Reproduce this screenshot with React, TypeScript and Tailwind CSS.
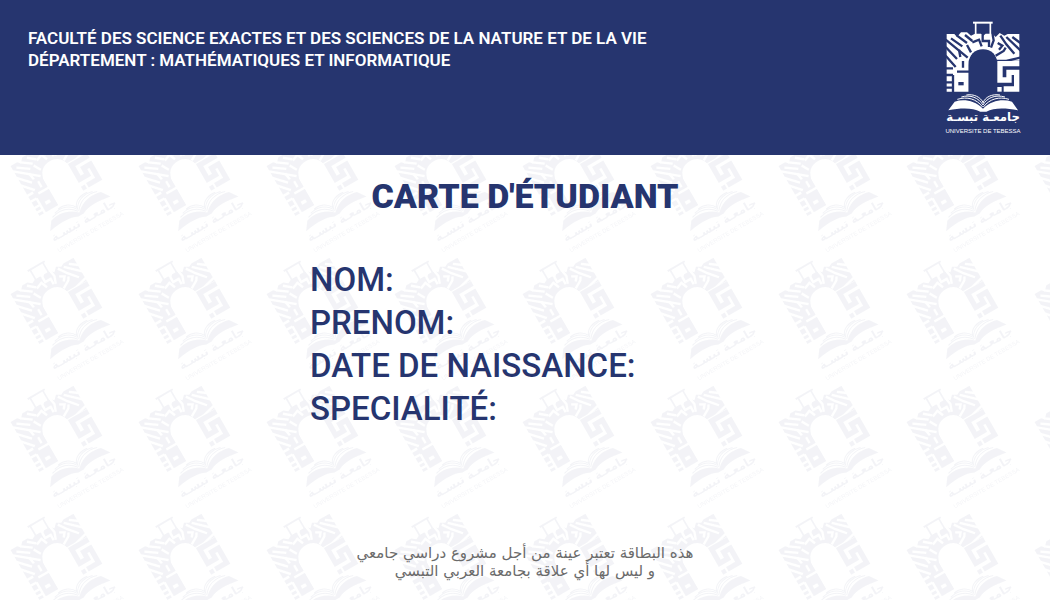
const WATERMARK_PITCH = 128;
const WATERMARK_ROWS = [31, 159, 287, 415, 543];
const WATERMARK_COLUMNS = Array.from({ length: 20 }, (_, i) => 64 + i * WATERMARK_PITCH);

const FIELDS = ["NOM:", "PRENOM:", "DATE DE NAISSANCE:", "SPECIALITÉ:"];

function LogoArt() {
  return (
    <>
      <g fill="none" stroke="currentColor">
        <path d="M114 23H173" strokeWidth="6" />
        <path d="M122 23V62M166 23V62" strokeWidth="5" />
      </g>
      <path
        mask="url(#gate-gaps)"
        fill="currentColor"
        d="M35 57H58L66 66L78 52H96L108 62L120 56H138L143 64L152 56H172L182 66L194 54L208 62L218 57H253V137H187L175 118H112L101 137V230H35Z"
      />
      <path
        fill="none"
        stroke="currentColor"
        strokeWidth="16"
        d="M253 146H195V195H222V172H245V222H206"
      />
      <path fill="currentColor" d="M187 216H200V230H187Z" />
      <path
        fill="currentColor"
        d="M40 286L59 260C85 252 117 255 144 281C171 255 204 252 231 260L249 286C211 279 177 278 154 290H136C112 278 78 279 40 286Z"
      />
      <g fill="none" stroke="currentColor" strokeWidth="3">
        <path d="M67 253C96 244 124 251 143 276M79 246C106 238 131 248 144 270M94 240C116 236 137 246 145 264" />
        <path d="M222 253C193 244 164 251 145 276M210 246C181 238 156 248 144 270M195 240C171 236 150 246 144 264" />
      </g>
      <text
        x="144"
        y="319"
        textAnchor="middle"
        fill="currentColor"
        direction="rtl"
        className="font-['DejaVu_Sans',sans-serif] text-[35px] font-bold"
      >
        جامعـة تبسـة
      </text>
      <text
        x="144"
        y="354"
        textAnchor="middle"
        fill="currentColor"
        className="font-['Liberation_Sans',sans-serif] text-[18px]"
      >
        UNIVERSITE DE TEBESSA
      </text>
    </>
  );
}

function GateMask() {
  return (
    <mask id="gate-gaps" maskUnits="userSpaceOnUse" x="0" y="0" width="285" height="375">
      <rect width="285" height="375" fill="white" />
      <path d="M101 240V150C101 119 119 103 144 103S187 119 187 150V240Z" fill="black" />
      <g fill="none" stroke="black" strokeWidth="7">
        <path d="M48 70L82 94M66 62L96 84M90 60L112 78" />
        <path d="M32 74L64 100L98 128M32 96L66 132M32 122L62 156" />
        <path d="M72 104L76 126M96 90L108 112M84 138V158" />
        <path d="M54 160H30M66 170H104M32 180H54M54 180V236M32 202H54M32 218H54" />
        <path d="M70 206H86" strokeWidth="10" />
        <path d="M112 82L132 74L140 94M143 60V78H162V96" />
        <path d="M172 54L176 76L168 98M188 84L202 92L192 104" />
        <path d="M196 62L214 88L238 116M214 66L258 108M232 66L256 84" />
        <path d="M182 122L206 108L212 98M186 138H214L258 127" />
      </g>
    </mask>
  );
}

function Watermark() {
  return (
    <svg className="absolute inset-0 h-full w-full text-[#26356f] opacity-5" aria-hidden="true">
      {WATERMARK_ROWS.map((y) =>
        WATERMARK_COLUMNS.map((x) => (
          <use
            key={`${x}-${y}`}
            href="#university-logo"
            transform={`translate(${x} ${y}) rotate(-30) scale(0.3333) translate(-144 -189)`}
          />
        )),
      )}
    </svg>
  );
}

export default function App() {
  return (
    <div className="flex min-h-screen flex-col bg-white font-['Roboto',sans-serif] text-[#26356f]">
      <header className="flex items-start justify-between bg-[#26356f] pt-[15px] pr-5 pb-[15px] pl-7 text-white">
        <div className="pt-3 text-[17px] leading-[22px] font-semibold">
          <p>FACULTÉ DES SCIENCE EXACTES ET DES SCIENCES DE LA NATURE ET DE LA VIE</p>
          <p>DÉPARTEMENT : MATHÉMATIQUES ET INFORMATIQUE</p>
        </div>
        <svg
          className="h-[125px] w-[95px] shrink-0"
          viewBox="0 0 285 375"
          role="img"
          aria-label="Université de Tébessa"
        >
          <defs>
            <GateMask />
          </defs>
          <g id="university-logo">
            <LogoArt />
          </g>
        </svg>
      </header>
      <main className="relative flex grow flex-col items-center overflow-hidden">
        <Watermark />
        <div className="relative flex w-full grow flex-col items-center pb-5">
          <h1 className="pt-5 text-[34px] leading-[42px] font-black">CARTE D'ÉTUDIANT</h1>
          <ul className="mt-[41px] w-[430px] text-[33px] leading-[43px] font-medium">
            {FIELDS.map((field) => (
              <li key={field}>{field}</li>
            ))}
          </ul>
          <footer
            dir="rtl"
            lang="ar"
            className="mt-auto text-center font-['DejaVu_Sans',sans-serif] text-[15px] leading-[18px] text-[#6b6b6b]"
          >
            <p>هذه البطاقة تعتبر عينة من أجل مشروع دراسي جامعي</p>
            <p>و ليس لها أي علاقة بجامعة العربي التبسي</p>
          </footer>
        </div>
      </main>
    </div>
  );
}
